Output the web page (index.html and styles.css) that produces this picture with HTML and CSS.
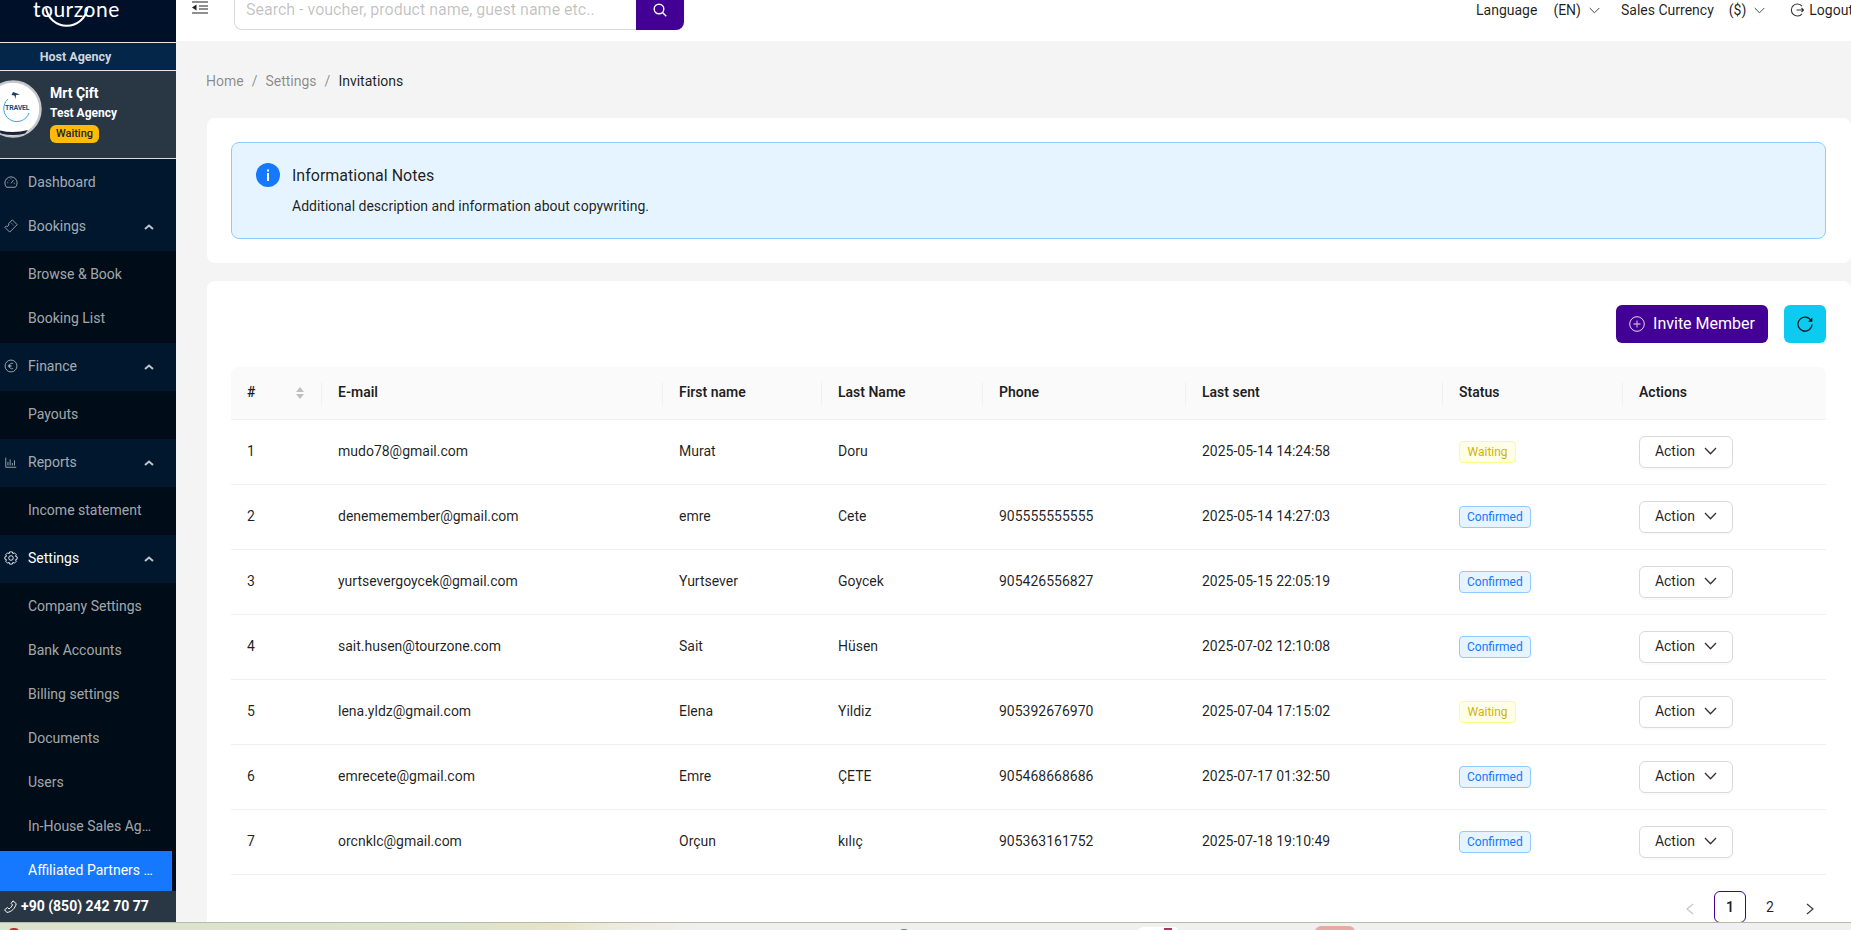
FILE: index.html
```html
<!DOCTYPE html>
<html lang="en">
<head>
<meta charset="utf-8">
<title>Invitations</title>
<link rel="stylesheet" href="styles.css">
</head>
<body>
<div class="app">
  <aside class="sidebar">
    <div class="logo">
      <svg width="50" height="42" viewBox="0 0 50 42" class="logo-ring" aria-hidden="true"><path d="M3 8A21 21 0 0 0 44.500 8" fill="none" stroke="#fff" stroke-width="2"/></svg>
      <span class="logo-text">tourzone</span>
    </div>
    <div class="host">Host Agency</div>
    <div class="user">
      <div class="avatar">
        <svg width="58" height="58" viewBox="0 0 58 58" aria-hidden="true">
          <circle cx="29" cy="29" r="27.500" fill="#fff" stroke="#c4c7cb" stroke-width="2.500"/>
          <path d="M14 50 Q29 54 44 50 L41 53.500 Q29 56.500 17 53.500Z" fill="#1a2238"/>
          <path d="M24 19A13 13 0 1 0 45 33" fill="none" stroke="#3aa3e3" stroke-width="1"/>
          <path d="M29 12l7 2.500-4 .5-.5 4-1-3.500-3-.5z" fill="#1d3c66"/>
        </svg>
        <span class="avatar-word">TRAVEL</span>
      </div>
      <div class="user-info">
        <div class="user-name">Mrt Çift</div>
        <div class="user-agency">Test Agency</div>
        <span class="user-status">Waiting</span>
      </div>
    </div>
    <nav class="menu">
      <a class="item item-first">
        <svg class="mi" viewBox="0 0 16 16"><path d="M3 14A7 7 0 1 1 13 14ZM8 9.500 11 5.800M3.800 8.800h1M11.200 9.500h1M5 5.500l.7.7M8 3.800v1" fill="none" stroke="currentColor"/></svg>
        <span>Dashboard</span>
      </a>
      <a class="item">
        <svg class="mi" viewBox="0 0 16 16"><path d="M9.500 1 15 6.500 6.500 15 1 9.500l1.700-1.700 1 1 2.100-2.100-1-1zM8 4.300l1 1M10 6.300l1 1" fill="none" stroke="currentColor"/></svg>
        <span>Bookings</span>
        <svg class="caret" viewBox="0 0 10 6"><path d="M1 5l4-3.500L9 5" fill="none" stroke="currentColor" stroke-width="2"/></svg>
      </a>
      <div class="sub">
        <a class="sub-item">Browse &amp; Book</a>
        <a class="sub-item">Booking List</a>
      </div>
      <a class="item">
        <svg class="mi" viewBox="0 0 16 16"><circle cx="8" cy="8" r="6.800" fill="none" stroke="currentColor"/><path d="M10.500 5.200A3 3 0 0 0 6 8a3 3 0 0 0 4.500 2.800M4.500 7.200h4M4.500 8.800h4" fill="none" stroke="currentColor" stroke-width=".9"/></svg>
        <span>Finance</span>
        <svg class="caret" viewBox="0 0 10 6"><path d="M1 5l4-3.500L9 5" fill="none" stroke="currentColor" stroke-width="2"/></svg>
      </a>
      <div class="sub">
        <a class="sub-item">Payouts</a>
      </div>
      <a class="item">
        <svg class="mi" viewBox="0 0 16 16"><path d="M2 3v11h12M4.500 8v4M7 5v7M9.500 9v3M12 6v6" fill="none" stroke="currentColor"/></svg>
        <span>Reports</span>
        <svg class="caret" viewBox="0 0 10 6"><path d="M1 5l4-3.500L9 5" fill="none" stroke="currentColor" stroke-width="2"/></svg>
      </a>
      <div class="sub">
        <a class="sub-item">Income statement</a>
      </div>
      <a class="item item-active">
        <svg class="mi" viewBox="0 0 16 16"><path d="M6.500 1h3l.6 2 1.800-.9 2.100 2.100-.9 1.800 1.900.7v2.600l-1.900.7.900 1.800-2.100 2.100-1.800-.9-.6 2h-3l-.6-2-1.800.9-2.100-2.100.9-1.800-1.900-.7V6.700l1.900-.7-.9-1.800 2.100-2.100 1.800.9z" fill="none" stroke="currentColor"/><circle cx="8" cy="8" r="2.600" fill="none" stroke="currentColor"/></svg>
        <span>Settings</span>
        <svg class="caret" viewBox="0 0 10 6"><path d="M1 5l4-3.500L9 5" fill="none" stroke="currentColor" stroke-width="2"/></svg>
      </a>
      <div class="sub sub-last">
        <a class="sub-item">Company Settings</a>
        <a class="sub-item">Bank Accounts</a>
        <a class="sub-item">Billing settings</a>
        <a class="sub-item">Documents</a>
        <a class="sub-item">Users</a>
        <a class="sub-item"><span class="trunc">In-House Sales Agents</span></a>
        <a class="sub-item sub-selected"><span class="trunc">Affiliated Partners Invitations</span></a>
      </div>
    </nav>
    <div class="phone">
      <svg width="13" height="13" viewBox="0 0 16 16" aria-hidden="true"><path d="M11 1 15 4.500C14 10 9 15 3.500 15.300L.7 12 4.300 9.300 6 11C8 10 9.500 8 10.500 6L8.800 4.300Z" fill="none" stroke="currentColor" stroke-width="1.200"/></svg>
      <span>+90 (850) 242 70 77</span>
    </div>
  </aside>
  <div class="main">
    <header class="topbar">
      <svg class="burger" width="17" height="14" viewBox="0 0 17 14" aria-hidden="true"><path d="M0 1h16M7 5h9M7 8h9M0 12h16" stroke="#222" stroke-width="1.200"/><path d="M4.500 3.500v6L0 6.500z" fill="#222"/></svg>
      <div class="search">
        <div class="search-input">Search - voucher, product name, guest name etc..</div>
        <button class="search-btn" type="button" aria-label="Search">
          <svg width="16" height="16" viewBox="0 0 16 16" aria-hidden="true"><circle cx="7" cy="7" r="4.800" fill="none" stroke="#fff" stroke-width="1.400"/><path d="M10.500 10.500l3.800 3.800" stroke="#fff" stroke-width="1.400"/></svg>
        </button>
      </div>
      <div class="top-right">
        <span class="t-label">Language</span>
        <span class="t-val">(EN)</span>
        <svg class="t-chev" viewBox="0 0 12 7"><path d="M.8.800l5.200 5.200 5.200-5.200" fill="none" stroke="#333" stroke-width="1"/></svg>
        <span class="t-label t-sales">Sales Currency</span>
        <span class="t-val t-usd">($)</span>
        <svg class="t-chev" viewBox="0 0 12 7"><path d="M.8.800l5.200 5.200 5.200-5.200" fill="none" stroke="#333" stroke-width="1"/></svg>
        <svg class="t-logout" viewBox="0 0 14 14"><path d="M12 3.200A6 6 0 1 0 12 10.800M6.500 7H14M11.500 5 13.500 7 11.500 9" fill="none" stroke="#333" stroke-width="1.100"/></svg>
        <span class="t-label">Logout</span>
      </div>
    </header>
    <div class="content">
      <div class="crumbs">
        <span>Home</span><i>/</i><span>Settings</span><i>/</i><b>Invitations</b>
      </div>
      <section class="card card-info">
        <div class="alert">
          <svg class="alert-icon" width="24" height="24" viewBox="0 0 24 24" aria-hidden="true"><circle cx="12" cy="12" r="12" fill="#1677ff"/><rect x="11" y="10" width="2" height="8" fill="#fff"/><rect x="11" y="6.500" width="2" height="2" fill="#fff"/></svg>
          <div>
            <div class="alert-title">Informational Notes</div>
            <div class="alert-desc">Additional description and information about copywriting.</div>
          </div>
        </div>
      </section>
      <section class="card card-table">
        <div class="toolbar">
          <button class="btn-invite" type="button">
            <svg width="16" height="16" viewBox="0 0 16 16" aria-hidden="true"><circle cx="8" cy="8" r="7.300" fill="none" stroke="#e4d9ef" stroke-width="1"/><path d="M4.500 8h7M8 4.500v7" stroke="#b79ad8" stroke-width="1.300"/></svg>
            Invite Member
          </button>
          <button class="btn-refresh" type="button" aria-label="Refresh">
            <svg width="16" height="16" viewBox="0 0 16 16" aria-hidden="true"><path d="M14 4.500A7 7 0 1 0 15 8.500" fill="none" stroke="#111" stroke-width="1.100"/><path d="M15.300 1.500v4.300h-4.200z" fill="#111"/></svg>
          </button>
        </div>
        <table class="tbl">
          <colgroup>
            <col class="c-num"><col class="c-mail"><col class="c-first"><col class="c-last"><col class="c-phone"><col class="c-sent"><col class="c-status"><col class="c-act">
          </colgroup>
          <thead>
            <tr>
              <th class="th-num"># <svg class="sorter" width="10" height="14" viewBox="0 0 10 14" aria-hidden="true"><path d="M5 1l4 5H1zM5 13l4-5H1z" fill="#bfbfbf"/></svg></th>
              <th>E-mail</th><th>First name</th><th>Last Name</th><th>Phone</th><th>Last sent</th><th>Status</th><th>Actions</th>
            </tr>
          </thead>
          <tbody>
            <tr><td>1</td><td>mudo78@gmail.com</td><td>Murat</td><td>Doru</td><td></td><td>2025-05-14 14:24:58</td><td><span class="tag tag-wait">Waiting</span></td><td><button class="act" type="button">Action<svg viewBox="0 0 13 8"><path d="M1 1l5.500 5.800L12 1" fill="none" stroke="#333" stroke-width="1.300"/></svg></button></td></tr>
            <tr><td>2</td><td>denememember@gmail.com</td><td>emre</td><td>Cete</td><td>905555555555</td><td>2025-05-14 14:27:03</td><td><span class="tag tag-ok">Confirmed</span></td><td><button class="act" type="button">Action<svg viewBox="0 0 13 8"><path d="M1 1l5.500 5.800L12 1" fill="none" stroke="#333" stroke-width="1.300"/></svg></button></td></tr>
            <tr><td>3</td><td>yurtsevergoycek@gmail.com</td><td>Yurtsever</td><td>Goycek</td><td>905426556827</td><td>2025-05-15 22:05:19</td><td><span class="tag tag-ok">Confirmed</span></td><td><button class="act" type="button">Action<svg viewBox="0 0 13 8"><path d="M1 1l5.500 5.800L12 1" fill="none" stroke="#333" stroke-width="1.300"/></svg></button></td></tr>
            <tr><td>4</td><td>sait.husen@tourzone.com</td><td>Sait</td><td>Hüsen</td><td></td><td>2025-07-02 12:10:08</td><td><span class="tag tag-ok">Confirmed</span></td><td><button class="act" type="button">Action<svg viewBox="0 0 13 8"><path d="M1 1l5.500 5.800L12 1" fill="none" stroke="#333" stroke-width="1.300"/></svg></button></td></tr>
            <tr><td>5</td><td>lena.yldz@gmail.com</td><td>Elena</td><td>Yildiz</td><td>905392676970</td><td>2025-07-04 17:15:02</td><td><span class="tag tag-wait">Waiting</span></td><td><button class="act" type="button">Action<svg viewBox="0 0 13 8"><path d="M1 1l5.500 5.800L12 1" fill="none" stroke="#333" stroke-width="1.300"/></svg></button></td></tr>
            <tr><td>6</td><td>emrecete@gmail.com</td><td>Emre</td><td>ÇETE</td><td>905468668686</td><td>2025-07-17 01:32:50</td><td><span class="tag tag-ok">Confirmed</span></td><td><button class="act" type="button">Action<svg viewBox="0 0 13 8"><path d="M1 1l5.500 5.800L12 1" fill="none" stroke="#333" stroke-width="1.300"/></svg></button></td></tr>
            <tr><td>7</td><td>orcnklc@gmail.com</td><td>Orçun</td><td>kılıç</td><td>905363161752</td><td>2025-07-18 19:10:49</td><td><span class="tag tag-ok">Confirmed</span></td><td><button class="act" type="button">Action<svg viewBox="0 0 13 8"><path d="M1 1l5.500 5.800L12 1" fill="none" stroke="#333" stroke-width="1.300"/></svg></button></td></tr>
          </tbody>
        </table>
        <div class="pager">
          <svg class="pg-arrow pg-prev" viewBox="0 0 8 12"><path d="M7 1L1 6l6 5" fill="none" stroke="#c4c4c4" stroke-width="1.100"/></svg>
          <span class="pg pg-on">1</span>
          <span class="pg">2</span>
          <svg class="pg-arrow pg-next" viewBox="0 0 8 12"><path d="M1 1l6 5-6 5" fill="none" stroke="#333" stroke-width="1.100"/></svg>
        </div>
      </section>
    </div>
  </div>
</div>
<div class="taskbar">
  <span class="tb tb-red"></span>
  <span class="tb tb-blue"></span>
  <span class="tb tb-tab"></span>
  <span class="tb tb-mag"></span>
  <span class="tb tb-pink"></span>
</div>
</body>
</html>
```
FILE: styles.css
```css
* { box-sizing: border-box; }
html, body { margin: 0; height: 930px; overflow: hidden; }
body { font-family: Roboto, "Liberation Sans", sans-serif; font-size: 14px; color: rgba(0,0,0,.88); background: #f4f4f4; }
button { font-family: inherit; cursor: pointer; }

.app { display: flex; height: 922px; overflow: hidden; }

/* Sidebar */
.sidebar { width: 176px; flex: none; background: #001529; display: flex; flex-direction: column; color: #fff; overflow: hidden; }
.logo { height: 43px; flex: none; position: relative; background: #001029; display: flex; justify-content: flex-start; padding-left: 33px; overflow: hidden; border-bottom: 1px solid #e8e8e8; }
.logo-ring { position: absolute; left: 43px; top: 0; }
.logo-text { font-family: Lato, sans-serif; font-size: 21px; line-height: 18px; letter-spacing: .5px; color: #fff; }
.host { height: 28px; flex: none; background: #042649; border-bottom: 1px solid #e8e8e8; display: flex; align-items: center; justify-content: center; padding-right: 25px; font-size: 12.500px; font-weight: 700; color: #cfd6dd; }
.user { height: 88px; flex: none; display: flex; background: #293744; border-bottom: 1px solid #dcdcdc; padding-top: 9px; }
.avatar { width: 58px; height: 58px; margin-left: -16px; flex: none; position: relative; }
.avatar-word { position: absolute; left: 21px; top: 24px; font-size: 7px; line-height: 9px; font-weight: 700; color: #1d4f7a; letter-spacing: -.2px; }
.user-info { margin-left: 8px; display: flex; flex-direction: column; align-items: flex-start; }
.user-name { font-size: 14px; font-weight: 700; line-height: 18px; margin-top: 4px; }
.user-agency { font-size: 12px; font-weight: 700; line-height: 16px; margin-top: 3px; }
.user-status { background: #ffbb05; color: #212529; border-radius: 6px; font-size: 11px; font-weight: 500; line-height: 18px; width: 49px; text-align: center; margin-top: 4px; }

.menu { flex: 1; display: flex; flex-direction: column; background: #001529; color: rgba(255,255,255,.65); overflow: hidden; min-height: 0; }
.item { height: 48px; flex: none; display: flex; align-items: center; padding: 0 0 2px 4px; background: #00172e; position: relative; }
.item-first { height: 44px; padding: 2px 0 0 4px; }
.item-active { color: #fff; }
.mi { width: 14px; height: 14px; margin-right: 10px; flex: none; }
.caret { position: absolute; left: 144px; top: 21px; width: 10px; height: 6px; color: rgba(255,255,255,.75); }
.sub { background: #000c17; padding: 3px 0 5px; display: flex; flex-direction: column; gap: 4px; flex: none; }
.sub-last { padding-bottom: 0; flex: 1; }
.sub-item { height: 40px; display: flex; align-items: center; padding-left: 28px; }
.trunc { display: block; width: 125px; white-space: nowrap; overflow: hidden; text-overflow: ellipsis; }
.sub-selected { background: #1677ff; color: #fff; width: 172px; margin-top: 1px; padding-bottom: 2px; }
.phone { height: 31px; flex: none; background: #293744; display: flex; align-items: center; padding: 0 0 1px 4px; gap: 4px; font-weight: 700; font-size: 14px; color: #fff; }

/* Main */
.main { flex: 1; min-width: 0; display: flex; flex-direction: column; }
.topbar { height: 41px; flex: none; background: #fff; display: flex; align-items: flex-start; overflow: hidden; }
.burger { margin: 1px 0 0 16px; flex: none; }
.search { display: flex; margin-left: 25px; margin-top: -10px; height: 40px; }
.search-input { width: 402px; height: 40px; border: 1px solid #d9d9d9; border-radius: 8px 0 0 8px; border-right: 0; padding: 0 11px; font-size: 16px; line-height: 38px; color: rgba(0,0,0,.25); white-space: nowrap; }
.search-btn { width: 48px; height: 40px; background: #430094; border: 0; border-radius: 0 8px 8px 0; padding: 0; display: flex; align-items: center; justify-content: center; }
.top-right { margin-left: auto; display: flex; align-items: center; height: 20px; color: rgba(0,0,0,.88); white-space: nowrap; width: 375px; }
.t-label { line-height: 20px; }
.t-val { margin-left: 16px; }
.t-usd { margin-left: 15px; }
.t-sales { margin-left: 21px; }
.t-chev { width: 11px; height: 7px; margin-left: 8px; flex: none; }
.t-logout { width: 14px; height: 14px; margin-left: 25px; margin-right: 5px; flex: none; }

.content { flex: 1; min-height: 0; overflow: hidden; padding: 0 0 0 31px; }
.crumbs { height: 22px; margin: 29px 0 0 -1px; display: flex; align-items: center; color: rgba(0,0,0,.45); }
.crumbs i { font-style: normal; margin: 0 8px; }
.crumbs b { font-weight: 400; color: rgba(0,0,0,.88); }

.card { background: #fff; border-radius: 8px 8px 0 0; }
.card-info { margin-top: 26px; padding: 24px 25px 24px 24px; height: 145px; border-radius: 8px; }
.alert { display: flex; background: #e6f4ff; border: 1px solid #91caff; border-radius: 8px; height: 97px; padding: 20px 24px; gap: 12px; }
.alert-icon { flex: none; }
.alert-title { font-size: 16px; line-height: 24px; margin-top: 1px; }
.alert-desc { font-size: 14px; line-height: 22px; margin-top: 7px; }
.card-table { margin-top: 18px; padding: 24px 25px 0 24px; height: 700px; }
.toolbar { display: flex; justify-content: flex-end; gap: 16px; height: 38px; }
.btn-invite { width: 152px; height: 38px; background: #430094; color: #fff; border: 0; border-radius: 6px; font-size: 16px; display: flex; align-items: center; justify-content: center; gap: 8px; padding: 0 0 1px; }
.btn-refresh { width: 42px; height: 38px; background: #0dcaf0; border: 0; border-radius: 6px; display: flex; align-items: center; justify-content: center; padding: 0; }

.tbl { width: 100%; table-layout: fixed; border-collapse: separate; border-spacing: 0; margin-top: 24px; }
.c-num { width: 91px; } .c-mail { width: 341px; } .c-first { width: 159px; } .c-last { width: 161px; }
.c-phone { width: 203px; } .c-sent { width: 257px; } .c-status { width: 180px; } .c-act { width: 203px; }
.tbl th { height: 53px; background: #fafafa; text-align: left; font-weight: 600; padding: 0 16px 2px; border-bottom: 1px solid #f0f0f0; position: relative; }
.tbl th:first-child { border-top-left-radius: 8px; }
.tbl th:last-child { border-top-right-radius: 8px; }
.tbl th:not(:last-child)::after { content: ""; position: absolute; right: 0; top: 15px; height: 23px; width: 1px; background: #f0f0f0; }
.sorter { position: absolute; left: 64px; top: 19px; }
.tbl td { height: 65px; padding: 0 16px 2px; border-bottom: 1px solid #f0f0f0; white-space: nowrap; }
.tbl td:nth-last-child(-n+2) { padding-bottom: 0; }
.tag { display: inline-block; font-size: 12px; line-height: 20px; padding: 0 7px; border-radius: 4px; border: 1px solid; vertical-align: middle; }
.tag-wait { background: #feffe6; border-color: #fffb8f; color: #d4b106; padding: 0 7.500px; }
.tag-ok { background: #e6f4ff; border-color: #91caff; color: #1677ff; }
.act { width: 94px; height: 32px; background: #fff; border: 1px solid #d9d9d9; border-radius: 6px; box-shadow: 0 2px 0 rgba(0,0,0,.02); font-size: 14px; color: rgba(0,0,0,.88); display: flex; align-items: center; justify-content: center; gap: 9px; padding: 0 0 2px; }
.act svg { width: 13px; height: 8px; }

.pager { display: flex; align-items: flex-start; justify-content: flex-end; margin-top: 16px; padding-right: 12px; }
.pg { width: 32px; height: 32px; border-radius: 6px; display: flex; align-items: center; justify-content: center; margin-left: 8px; }
.pg-on { border: 1px solid #430094; font-weight: 600; }
.pg-arrow { width: 8px; height: 12px; margin-top: 12px; }
.pg-prev { margin-right: 12px; }
.pg-next { margin-left: 20px; }

.taskbar { height: 8px; position: relative; overflow: hidden; border-top: 1px solid #b9bba9; background: linear-gradient(90deg,#dbe3cd 0,#dde3cd 24%,#e6e3c8 30%,#ecebdc 33%,#f0f0f0 38%,#f0f0f0 100%); }
.tb { position: absolute; display: block; }
.tb-red { left: 9px; top: 5px; width: 10px; height: 4px; background: #c2302b; border-radius: 5px 5px 0 0; }
.tb-blue { left: 900px; top: 6px; width: 8px; height: 3px; background: #2b8fe0; border-radius: 4px 4px 0 0; }
.tb-tab { left: 1139px; top: 4px; width: 39px; height: 5px; background: #fff; border-radius: 4px 4px 0 0; }
.tb-mag { left: 1164px; top: 5px; width: 8px; height: 4px; background: #b5305f; }
.tb-pink { left: 1315px; top: 3px; width: 40px; height: 6px; background: #e8aaa5; border-radius: 6px 6px 0 0; }
```
